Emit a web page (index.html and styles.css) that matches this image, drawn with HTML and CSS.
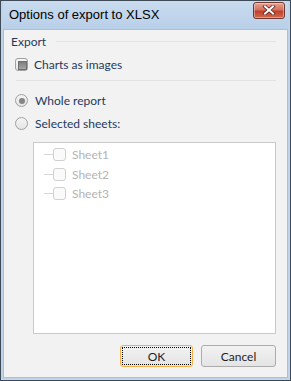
FILE: index.html
```html
<!doctype html>
<html lang="en">
  <head>
    <meta charset="UTF-8" />
    <title>Options of export to XLSX</title>
    <link rel="stylesheet" href="styles.css">
  </head>
  <body>
    <div class="window">
      <div class="titlebar">
        <span class="title">Options of export to XLSX</span>
        <button class="close" aria-label="Close">
          <svg width="14" height="10" viewBox="0 0 14 10">
            <path d="M3 1.5 L11 8.5 M11 1.5 L3 8.5" stroke="#5a2620" stroke-width="3.6" stroke-linecap="square" />
            <path d="M3 1.5 L11 8.5 M11 1.5 L3 8.5" stroke="#ffffff" stroke-width="2" stroke-linecap="square" />
          </svg>
        </button>
      </div>

      <div class="content">
        <div class="group-title">
          <span>Export</span>
          <div class="rule"></div>
        </div>

        <label class="option first">
          <span class="check checked"></span>
          Charts as images
        </label>

        <div class="separator"></div>

        <label class="option">
          <span class="radio checked"></span>
          Whole report
        </label>
        <label class="option">
          <span class="radio"></span>
          Selected sheets:
        </label>

        <div class="sheets">
          <div class="sheet"><span class="dash"></span><span class="check"></span>Sheet1</div>
          <div class="sheet"><span class="dash"></span><span class="check"></span>Sheet2</div>
          <div class="sheet"><span class="dash"></span><span class="check"></span>Sheet3</div>
        </div>

        <div class="buttons">
          <button class="button default">OK</button>
          <button class="button">Cancel</button>
        </div>
      </div>
    </div>
  </body>
</html>
```

FILE: styles.css
```css
* {
  margin: 0;
  padding: 0;
  box-sizing: border-box;
}

body {
  font-family: Lato, "Liberation Sans", sans-serif;
  font-size: 12px;
  color: #1e1e1e;
  background: #ffffff;
}

.window {
  width: 291px;
  height: 381px;
  border: 1px solid #3f4a57;
  background: #bfd4ea;
  display: flex;
  flex-direction: column;
  padding: 0 2px 2px 2px;
}

.titlebar {
  height: 29px;
  display: flex;
  align-items: center;
  justify-content: space-between;
  padding: 0 3px 0 6px;
  background: linear-gradient(#c9dbee, #b9d0e9);
}

.title {
  font-family: "Liberation Sans", Arial, sans-serif;
  font-size: 13px;
  color: #000;
  margin-top: -1px;
}

.close {
  width: 32px;
  height: 17px;
  margin-top: -10px;
  border: 1px solid #6e3a33;
  border-radius: 3px;
  background: linear-gradient(#e8a395 0%, #d5705e 45%, #c2412b 55%, #d06b4e 100%);
  display: flex;
  align-items: center;
  justify-content: center;
  box-shadow: inset 0 0 0 1px rgba(255, 255, 255, 0.35);
}

.content {
  flex: 1;
  background: #f2f2f2;
  border: 1px solid #a8c0da;
  display: flex;
  flex-direction: column;
  padding: 2px 11px 10px 7px;
}

.group-title {
  display: flex;
  align-items: center;
  gap: 10px;
  height: 18px;
  color: #1e3a5f;
}

.rule {
  flex: 1;
  height: 1px;
  background: #e2e2e2;
}

.option {
  display: flex;
  align-items: center;
  gap: 6px;
  height: 23px;
  padding-left: 4px;
  color: #1e3a5f;
}

.option.first {
  margin-top: 3px;
}

.check {
  width: 13px;
  height: 13px;
  border: 1px solid #a0a0a0;
  border-radius: 3px;
  background: linear-gradient(#f6f6f6, #e6e6e6);
  display: inline-block;
  position: relative;
  flex: none;
}

.check.checked::after {
  content: "";
  position: absolute;
  left: 2px;
  top: 2px;
  width: 7px;
  height: 7px;
  background: linear-gradient(#7e7e7e, #a6a6a6);
  border: 1px solid #6f6f6f;
}

.radio {
  width: 13px;
  height: 13px;
  border: 1px solid #a0a0a0;
  border-radius: 50%;
  background: linear-gradient(#f4f4f4, #e4e4e4);
  display: inline-block;
  position: relative;
  flex: none;
  margin-right: 1px;
}

.radio.checked::after {
  content: "";
  position: absolute;
  left: 2.5px;
  top: 2.5px;
  width: 6px;
  height: 6px;
  border-radius: 50%;
  background: #858585;
}

.separator {
  height: 1px;
  background: #e2e2e2;
  margin: 4px 0 8px 5px;
}

.sheets {
  margin: 7px 0 0 22px;
  height: 192px;
  background: #ffffff;
  border: 1px solid #cacaca;
  padding-top: 2px;
}

.sheet {
  display: flex;
  align-items: center;
  height: 19.5px;
  color: #b4b4b4;
  padding-left: 10px;
}

.dash {
  width: 9px;
  height: 1px;
  background: #d6d6d6;
}

.sheet .check {
  border-color: #d0d0d0;
  background: #fafafa;
  margin-right: 6px;
}

.buttons {
  display: flex;
  justify-content: flex-end;
  gap: 8px;
  margin-top: 11px;
}

.button {
  width: 75px;
  height: 22px;
  font-family: inherit;
  font-size: 12px;
  color: #1e1e1e;
  border: 1px solid #acacac;
  border-radius: 3px;
  background: linear-gradient(#f2f2f2, #e4e4e4);
}

.button.default {
  width: 73px;
  border-color: #f2b24a;
  outline: 1px dotted #000;
  outline-offset: -3px;
}
```
